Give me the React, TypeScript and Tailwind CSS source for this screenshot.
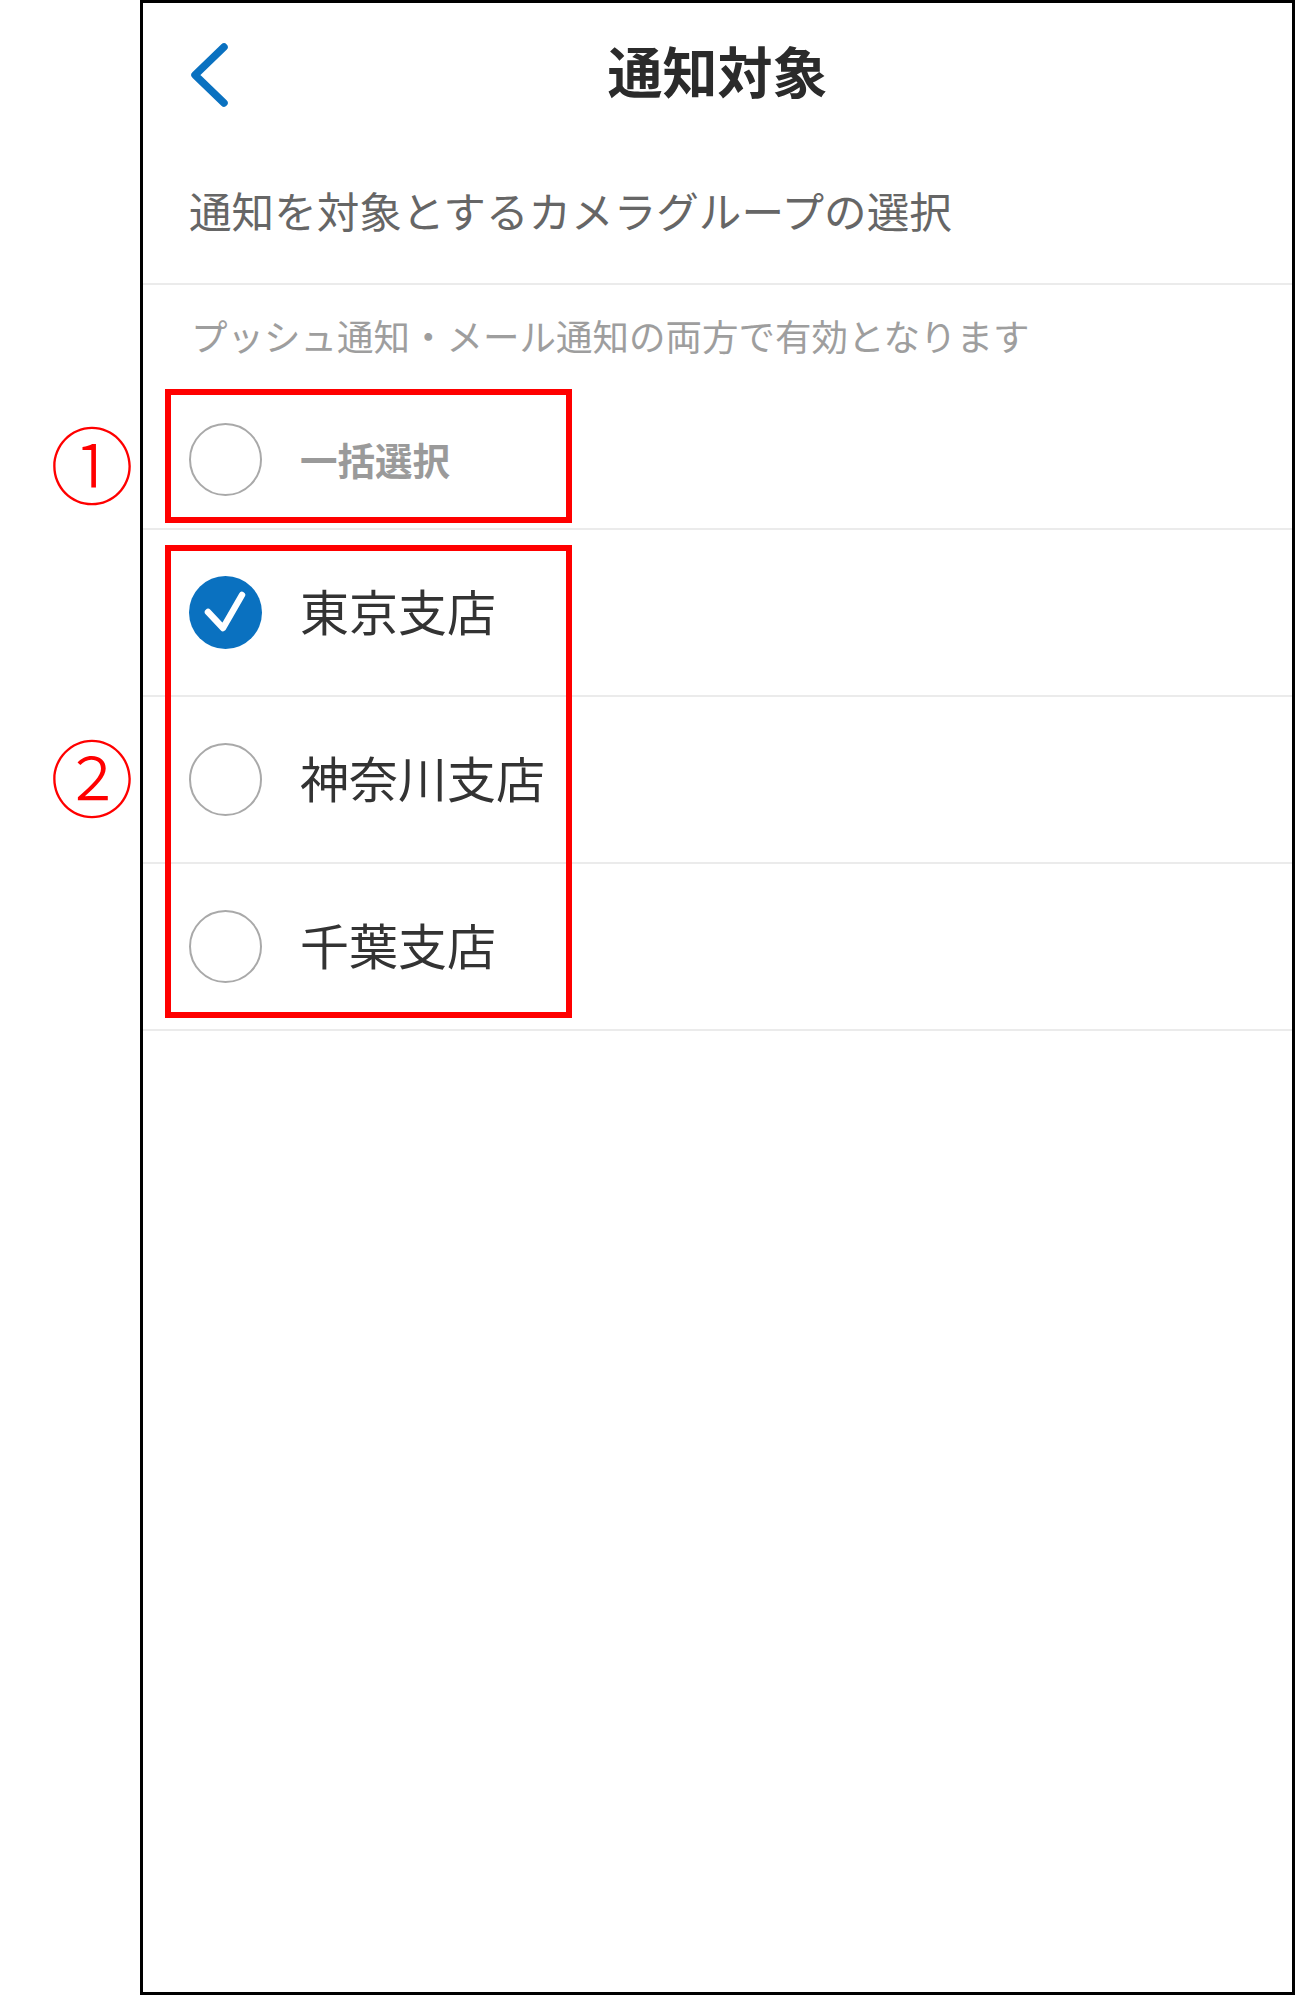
import React from 'react';

/* =========================
   Data
========================= */
interface Group {
  name: string;
  checked: boolean;
}

const groups: Group[] = [
  { name: '東京支店', checked: true },
  { name: '神奈川支店', checked: false },
  { name: '千葉支店', checked: false },
];

const jp = { fontFamily: '"Noto Sans CJK JP", "Noto Sans", sans-serif' };

/* =========================
   Radio
========================= */
const Radio: React.FC<{ checked: boolean }> = ({ checked }) =>
  checked ? (
    <svg width="73" height="73" viewBox="0 0 73 73" className="shrink-0">
      <circle cx="36.5" cy="36.5" r="36.5" fill="#0a71c0" />
      <polyline
        points="19,36 34,52 53,19"
        fill="none"
        stroke="#ffffff"
        strokeWidth="6.5"
        strokeLinecap="round"
        strokeLinejoin="round"
      />
    </svg>
  ) : (
    <div className="w-[73px] h-[73px] shrink-0 rounded-full border-[2.5px] border-[#a9a9a9]" />
  );

/* =========================
   Page
========================= */
export default function App() {
  return (
    <div className="relative w-[1297px] h-[1996px] bg-white" style={jp}>
      <div className="ml-[140px] w-[1155px] h-[1995px] border-[3px] border-black flex flex-col">
        {/* Header */}
        <div className="relative h-[139px] flex items-center justify-center shrink-0">
          <svg
            width="44"
            height="68"
            viewBox="0 0 44 68"
            className="absolute left-[44px] top-[38px]"
          >
            <polyline
              points="37,6 8,34 37,62"
              fill="none"
              stroke="#0a71c0"
              strokeWidth="7.5"
              strokeLinecap="round"
              strokeLinejoin="round"
            />
          </svg>
          <h1 className="text-[55px] font-bold text-[#2b2b2b] leading-none mt-[-6px]">通知対象</h1>
        </div>

        {/* Subtitle */}
        <div className="h-[141px] shrink-0 flex items-center pl-[46px] border-b-2 border-[#ebebeb] box-content">
          <p className="text-[42.6px] text-[#666666] leading-none mt-[-5px]">通知を対象とするカメラグループの選択</p>
        </div>

        {/* Note */}
        <div className="h-[106px] shrink-0 flex items-center pl-[48px]">
          <p className="text-[36.5px] text-[#9e9e9e] leading-none mt-[-3px]">
            プッシュ通知・メール通知の両方で有効となります
          </p>
        </div>

        {/* Select all */}
        <div className="h-[137px] shrink-0 flex items-center gap-[38px] pl-[46px] border-b-2 border-[#ebebeb] box-content">
          <Radio checked={false} />
          <span className="text-[37.5px] font-bold text-[#9a9a9a] leading-none mt-[-2px]">一括選択</span>
        </div>

        {/* Groups */}
        {groups.map((g) => (
          <div
            key={g.name}
            className="h-[165px] shrink-0 flex items-center gap-[38px] pl-[46px] border-b-2 border-[#ebebeb] box-content"
          >
            <Radio checked={g.checked} />
            <span className="text-[49px] text-[#333333] leading-none mt-[-7px]">{g.name}</span>
          </div>
        ))}
      </div>

      {/* Annotation boxes */}
      <div className="absolute left-[165px] top-[389px] w-[407px] h-[134px] border-[6px] border-[#ff0000]" />
      <div className="absolute left-[165px] top-[545px] w-[407px] h-[473px] border-[6px] border-[#ff0000]" />

      {/* Annotation numbers */}
      <span className="absolute left-[46px] top-[416px] w-[92px] h-[92px] flex items-center justify-center text-[84px] font-light leading-none text-[#ff0000]">
        ①
      </span>
      <span className="absolute left-[46px] top-[729px] w-[92px] h-[92px] flex items-center justify-center text-[84px] font-light leading-none text-[#ff0000]">
        ②
      </span>
    </div>
  );
}
